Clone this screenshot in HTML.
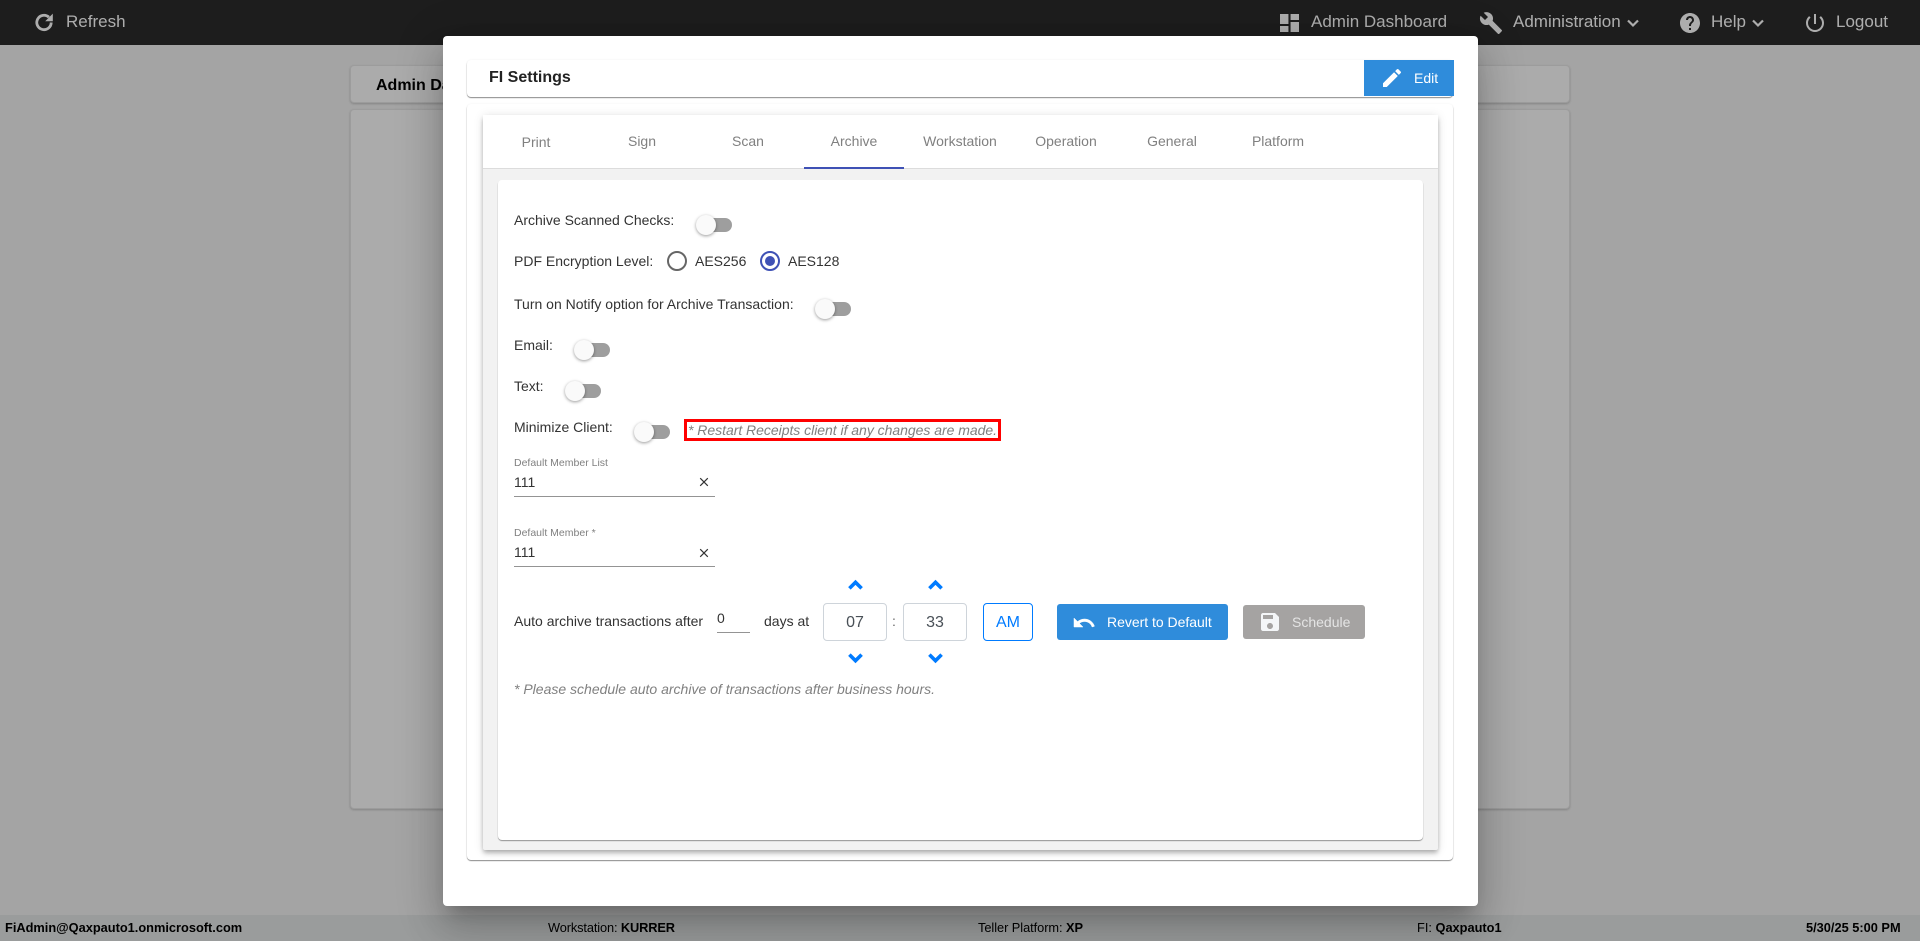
<!DOCTYPE html>
<html lang="en">
<head>
<meta charset="utf-8">
<title>FI Settings</title>
<style>
html,body{margin:0;padding:0;width:1920px;height:941px;overflow:hidden;background:#f2f2f2;font-family:"Liberation Sans",Arial,sans-serif;}
*{box-sizing:border-box;}
.a{position:absolute;}
.t{position:absolute;line-height:20px;height:20px;white-space:nowrap;color:#333;font-size:14px;}
.c{text-align:center;transform:translateX(-50%);}
.bar{left:0;top:0;width:1920px;height:45px;background:#2b2b2b;}
.bt{color:#fff;font-size:17px;}
.foot{left:0;top:915px;width:1920px;height:26px;background:#e4e6e6;}
.ft{color:#000;font-size:12.8px;}
.ft b{font-weight:bold;}
.bgc{background:#fcfcfc;border:1px solid #e6e6e6;border-radius:4px;box-shadow:0 1px 2px rgba(0,0,0,.2);}
.backdrop{left:0;top:0;width:1920px;height:941px;background:rgba(0,0,0,.32);}
.modal{left:443px;top:36px;width:1035px;height:870px;background:#fff;border-radius:4px;box-shadow:0 11px 15px -7px rgba(0,0,0,.2),0 24px 38px 3px rgba(0,0,0,.14),0 9px 46px 8px rgba(0,0,0,.12);}
.card1{left:467px;top:60px;width:986px;height:37px;background:#fff;border-radius:4px;box-shadow:0 1px 1px rgba(0,0,0,.45),0 0 2px rgba(0,0,0,.06);}
.card2{left:467px;top:104px;width:986px;height:756px;background:#fff;border-radius:4px;box-shadow:0 1px 1px rgba(0,0,0,.45),0 0 2px rgba(0,0,0,.05);}
.card3{left:483px;top:115px;width:955px;height:735px;background:#f2f2f2;border-radius:2px;box-shadow:0 2px 4px -1px rgba(0,0,0,.2),0 4px 5px rgba(0,0,0,.14),0 1px 10px rgba(0,0,0,.12);}
.tabs{left:483px;top:115px;width:955px;height:54px;background:#fff;border-bottom:1px solid #dcdcdc;}
.tab{color:#808080;font-size:14px;}
.card4{left:498px;top:180px;width:925px;height:660px;background:#fff;border-radius:4px;box-shadow:0 1px 1px rgba(0,0,0,.4);}
.track{position:absolute;width:34px;height:14px;border-radius:7px;background:#9e9e9e;}
.thumb{position:absolute;width:20px;height:20px;border-radius:50%;background:#fafafa;box-shadow:0 1px 3px rgba(0,0,0,.4);}
.ul{position:absolute;height:1px;background:#949494;}
.box{position:absolute;top:603px;height:38px;border:1px solid #ced4da;border-radius:4px;background:#fff;color:#495057;font-size:16px;line-height:37px;text-align:center;}
.btn{position:absolute;border-radius:3px;}
svg{position:absolute;display:block;overflow:visible;}
</style>
</head>
<body>
<!-- background page -->
<div class="a bar"></div>
<svg style="left:33px;top:11px" width="23" height="23" viewBox="0 0 23 23"><path d="M18.2 11.5a7.2 7.2 0 1 1-2.3-5.3" fill="none" stroke="#fff" stroke-width="2.8"/><path d="M19.8 2.6v7.6h-7.6z" fill="#fff"/></svg>
<div class="t bt" style="left:66px;top:12px">Refresh</div>
<svg style="left:1280px;top:14px" width="19" height="18" viewBox="3 3 18 18" preserveAspectRatio="none"><path fill="#fff" d="M3 13h8V3H3v10zm0 8h8v-6H3v6zm10 0h8V11h-8v10zm0-18v6h8V3h-8z"/></svg>
<div class="t bt" style="left:1311px;top:12px">Admin Dashboard</div>
<svg style="left:1479px;top:11px" width="24" height="24" viewBox="0 0 24 24"><path fill="#fff" d="M22.7 19l-9.1-9.1c.9-2.3.4-5-1.5-6.9-2-2-5-2.4-7.4-1.3L9 6 6 9 1.6 4.7C.4 7.1.9 10.1 2.9 12.1c1.9 1.9 4.6 2.4 6.9 1.5l9.1 9.1c.4.4 1 .4 1.4 0l2.3-2.3c.5-.4.5-1.1.1-1.4z"/></svg>
<div class="t bt" style="left:1513px;top:12px">Administration</div>
<svg style="left:1627px;top:19px" width="12" height="8" viewBox="0 0 12 8"><path d="M1 1.5l5 5 5-5" fill="none" stroke="#fff" stroke-width="2.2"/></svg>
<svg style="left:1678px;top:11px" width="24" height="24" viewBox="0 0 24 24"><path fill="#fff" d="M12 2C6.48 2 2 6.48 2 12s4.48 10 10 10 10-4.48 10-10S17.52 2 12 2zm1 17h-2v-2h2v2zm2.07-7.75l-.9.92C13.45 12.9 13 13.5 13 15h-2v-.5c0-1.1.45-2.1 1.17-2.83l1.24-1.26c.37-.36.59-.86.59-1.41 0-1.1-.9-2-2-2s-2 .9-2 2H8c0-2.21 1.79-4 4-4s4 1.79 4 4c0 .88-.36 1.68-.93 2.25z"/></svg>
<div class="t bt" style="left:1711px;top:12px">Help</div>
<svg style="left:1752px;top:19px" width="12" height="8" viewBox="0 0 12 8"><path d="M1 1.5l5 5 5-5" fill="none" stroke="#fff" stroke-width="2.2"/></svg>
<svg style="left:1803px;top:11px" width="24" height="24" viewBox="0 0 24 24"><path fill="#fff" d="M13 3h-2v10h2V3zm4.83 2.17l-1.42 1.42C17.99 7.86 19 9.81 19 12c0 3.87-3.13 7-7 7s-7-3.13-7-7c0-2.19 1.01-4.14 2.58-5.42L6.17 5.17C4.23 6.82 3 9.26 3 12c0 4.97 4.03 9 9 9s9-4.03 9-9c0-2.74-1.23-5.18-3.17-6.83z"/></svg>
<div class="t bt" style="left:1836px;top:12px">Logout</div>

<div class="a bgc" style="left:350px;top:65px;width:1220px;height:38px"></div>
<div class="t" style="left:376px;top:76px;font-size:16px;font-weight:bold;color:#000">Admin Dashboard</div>
<div class="a bgc" style="left:350px;top:109px;width:1220px;height:700px"></div>

<div class="a foot"></div>
<div class="t ft" style="left:5px;top:918px"><b>FiAdmin@Qaxpauto1.onmicrosoft.com</b></div>
<div class="t ft" style="left:548px;top:918px;letter-spacing:-.12px">Workstation: <b>KURRER</b></div>
<div class="t ft" style="left:978px;top:918px;letter-spacing:-.05px">Teller Platform: <b>XP</b></div>
<div class="t ft" style="left:1417px;top:918px">FI: <b>Qaxpauto1</b></div>
<div class="t ft" style="left:1806px;top:918px"><b>5/30/25 5:00 PM</b></div>

<div class="a backdrop"></div>

<!-- modal -->
<div class="a modal"></div>
<div class="a card1"></div>
<div class="t" style="left:489px;top:67px;font-size:16px;font-weight:bold;color:#222;margin-top:1px">FI Settings</div>
<div class="btn" style="left:1364px;top:60px;width:90px;height:36px;background:#2f8cdb;border-radius:0"></div>
<svg style="left:1380px;top:66px" width="24" height="24" viewBox="0 0 24 24"><path fill="#fff" d="M3 17.25V21h3.75L17.81 9.94l-3.75-3.75L3 17.25zM20.71 7.04c.39-.39.39-1.02 0-1.41l-2.34-2.34c-.39-.39-1.02-.39-1.41 0l-1.83 1.83 3.75 3.75 1.83-1.83z"/></svg>
<div class="t" style="left:1414px;top:68px;color:#fff">Edit</div>

<div class="a card2"></div>
<div class="a card3"></div>
<div class="a tabs"></div>
<div class="t tab c" style="left:536px;top:132px">Print</div>
<div class="t tab c" style="left:642px;top:131px">Sign</div>
<div class="t tab c" style="left:748px;top:131px">Scan</div>
<div class="t tab c" style="left:854px;top:131px">Archive</div>
<div class="t tab c" style="left:960px;top:131px">Workstation</div>
<div class="t tab c" style="left:1066px;top:131px">Operation</div>
<div class="t tab c" style="left:1172px;top:131px">General</div>
<div class="t tab c" style="left:1278px;top:131px">Platform</div>
<div class="a" style="left:804px;top:167px;width:100px;height:2px;background:#3f51b5"></div>
<div class="a card4"></div>

<!-- form -->
<div class="t" style="left:514px;top:210px">Archive Scanned Checks:</div>
<div class="track" style="left:698px;top:218px"></div><div class="thumb" style="left:696px;top:215px"></div>

<div class="t" style="left:514px;top:251px">PDF Encryption Level:</div>
<div class="a" style="left:667px;top:251px;width:20px;height:20px;border:2px solid #666;border-radius:50%"></div>
<div class="t" style="left:695px;top:251px">AES256</div>
<div class="a" style="left:760px;top:251px;width:20px;height:20px;border:2px solid #3f51b5;border-radius:50%"></div>
<div class="a" style="left:765px;top:256px;width:10px;height:10px;background:#3f51b5;border-radius:50%"></div>
<div class="t" style="left:788px;top:251px">AES128</div>

<div class="t" style="left:514px;top:294px">Turn on Notify option for Archive Transaction:</div>
<div class="track" style="left:817px;top:302px"></div><div class="thumb" style="left:815px;top:299px"></div>

<div class="t" style="left:514px;top:335px">Email:</div>
<div class="track" style="left:576px;top:343px"></div><div class="thumb" style="left:574px;top:340px"></div>

<div class="t" style="left:514px;top:376px">Text:</div>
<div class="track" style="left:567px;top:384px"></div><div class="thumb" style="left:565px;top:381px"></div>

<div class="t" style="left:514px;top:417px">Minimize Client:</div>
<div class="track" style="left:636px;top:425px"></div><div class="thumb" style="left:634px;top:422px"></div>

<div class="a" style="left:684px;top:419px;width:317px;height:22px;border:3px solid #f00"></div>
<div class="t" style="left:688px;top:420px;color:#808080;font-style:italic;letter-spacing:-.03px">* Restart Receipts client if any changes are made.</div>

<div class="t" style="left:514px;top:453px;font-size:10.5px;color:#808080">Default Member List</div>
<div class="t" style="left:514px;top:472px">111</div>
<svg style="left:699px;top:477px" width="10" height="10" viewBox="0 0 10 10"><path d="M1.2 1.2l7.6 7.6M8.8 1.2L1.2 8.8" stroke="#333" stroke-width="1.2" fill="none"/></svg>
<div class="ul" style="left:514px;top:496px;width:201px"></div>

<div class="t" style="left:514px;top:523px;font-size:10.5px;color:#808080">Default Member *</div>
<div class="t" style="left:514px;top:542px">111</div>
<svg style="left:699px;top:548px" width="10" height="10" viewBox="0 0 10 10"><path d="M1.2 1.2l7.6 7.6M8.8 1.2L1.2 8.8" stroke="#333" stroke-width="1.2" fill="none"/></svg>
<div class="ul" style="left:514px;top:566px;width:201px"></div>

<div class="t" style="left:514px;top:611px">Auto archive transactions after</div>
<div class="t" style="left:717px;top:608px;font-size:14px">0</div>
<div class="ul" style="left:717px;top:632px;width:33px"></div>
<div class="t" style="left:764px;top:611px">days at</div>
<div class="box" style="left:823px;width:64px">07</div>
<div class="t" style="left:892px;top:611px;color:#666">:</div>
<div class="box" style="left:903px;width:64px">33</div>
<div class="box" style="left:983px;width:50px;border-color:#007bff;color:#007bff">AM</div>
<svg style="left:848px;top:580px" width="15" height="10" viewBox="0 0 15 10"><path d="M1.4 8.4l6.1-6.1 6.1 6.1" fill="none" stroke="#007bff" stroke-width="3.6"/></svg>
<svg style="left:928px;top:580px" width="15" height="10" viewBox="0 0 15 10"><path d="M1.4 8.4l6.1-6.1 6.1 6.1" fill="none" stroke="#007bff" stroke-width="3.6"/></svg>
<svg style="left:848px;top:653px" width="15" height="10" viewBox="0 0 15 10"><path d="M1.4 1.6l6.1 6.1 6.1-6.1" fill="none" stroke="#007bff" stroke-width="3.6"/></svg>
<svg style="left:928px;top:653px" width="15" height="10" viewBox="0 0 15 10"><path d="M1.4 1.6l6.1 6.1 6.1-6.1" fill="none" stroke="#007bff" stroke-width="3.6"/></svg>

<div class="btn" style="left:1057px;top:604px;width:171px;height:36px;background:#2f8cdb"></div>
<svg style="left:1072px;top:611px" width="24" height="24" viewBox="0 0 24 24"><path fill="#fff" stroke="#fff" stroke-width=".5" d="M12.5 8c-2.65 0-5.05.99-6.9 2.6L2 7v9h9l-3.62-3.62c1.39-1.16 3.16-1.88 5.12-1.88 3.54 0 6.55 2.31 7.6 5.5l2.37-.78C21.08 11.03 17.15 8 12.5 8z"/></svg>
<div class="t" style="left:1107px;top:612px;color:#fff;letter-spacing:-.02px">Revert to Default</div>
<div class="btn" style="left:1243px;top:605px;width:122px;height:34px;background:#a5a3a2"></div>
<svg style="left:1258px;top:610px" width="24" height="24" viewBox="0 0 24 24"><path fill="#f4f6f8" d="M17 3H5c-1.11 0-2 .9-2 2v14c0 1.1.89 2 2 2h14c1.1 0 2-.9 2-2V7l-4-4zm-5 16c-1.66 0-3-1.34-3-3s1.34-3 3-3 3 1.34 3 3-1.34 3-3 3zm3-10H5V5h10v4z"/></svg>
<div class="t" style="left:1292px;top:612px;color:#e4e4e4">Schedule</div>

<div class="t" style="left:514px;top:679px;color:#808080;font-style:italic">* Please schedule auto archive of transactions after business hours.</div>
</body>
</html>
